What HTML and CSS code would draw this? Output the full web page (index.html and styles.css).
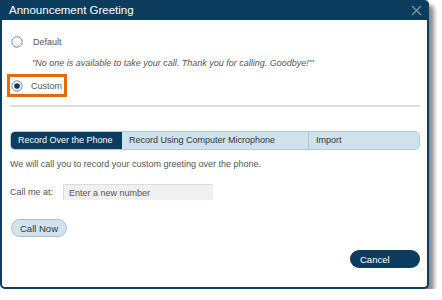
FILE: index.html
```html
<!DOCTYPE html>
<html>

<head>
    <title>Announcement Greeting</title>
    <link rel="stylesheet" href="styles.css">
</head>

<body>
    <div class="dialog">
        <div class="titlebar">
            <span class="title">Announcement Greeting</span>
            <svg class="close" width="11" height="11" viewBox="0 0 11 11">
                <path d="M1 1 L10 10 M10 1 L1 10" stroke="#7f97a9" stroke-width="1.3" fill="none" />
            </svg>
        </div>

        <div class="content">
            <div class="option">
                <svg class="radio" width="12" height="12" viewBox="0 0 12 12">
                    <defs>
                        <linearGradient id="rg" x1="0" y1="0" x2="0" y2="1">
                            <stop offset="0" stop-color="#ffffff" />
                            <stop offset="1" stop-color="#e4e8ec" />
                        </linearGradient>
                    </defs>
                    <circle cx="6" cy="6" r="5.2" fill="url(#rg)" stroke="#8496a6" stroke-width="1" />
                </svg>
                <span class="label">Default</span>
            </div>
            <div class="quote">"No one is available to take your call. Thank you for calling. Goodbye!'"</div>

            <div class="option option-custom">
                <svg class="radio" width="12" height="12" viewBox="0 0 12 12">
                    <circle cx="6" cy="6" r="5.2" fill="url(#rg)" stroke="#8496a6" stroke-width="1" />
                    <circle cx="6" cy="6" r="2.8" fill="#0c3a5a" />
                </svg>
                <span class="label">Custom</span>
            </div>

            <div class="divider"></div>

            <div class="tabs">
                <div class="tab tab-active">Record Over the Phone</div>
                <div class="tab tab-mic">Record Using Computer Microphone</div>
                <div class="tab tab-import">Import</div>
            </div>

            <p class="info">We will call you to record your custom greeting over the phone.</p>

            <div class="call-row">
                <span class="call-label">Call me at:</span>
                <input type="text" class="number-field" placeholder="Enter a new number">
            </div>

            <button class="btn-call" type="button">Call Now</button>

            <div class="footer">
                <button class="btn-cancel" type="button">Cancel</button>
            </div>
        </div>
    </div>
</body>

</html>
```

FILE: styles.css
```css
body {
    margin: 0;
    background-color: #ffffff;
    font-family: "Liberation Sans", Arial, sans-serif;
}

.dialog {
    box-sizing: border-box;
    width: 429px;
    height: 289px;
    border: 2px solid #0c3d5e;
    border-top: 0;
    border-radius: 0 5px 5px 5px;
    box-shadow: 5px 5px 4px rgba(0, 0, 0, 0.45);
    background-color: #ffffff;
}

.titlebar {
    display: flex;
    align-items: center;
    justify-content: space-between;
    height: 20px;
    margin: 0 -2px;
    padding: 0 7px 0 9px;
    background-color: #0c3d5e;
    border-radius: 0 5px 0 0;
}

.title {
    color: #ffffff;
    font-size: 11.5px;
}

.close {
    display: block;
}

.content {
    padding: 10px 7px 0 8px;
}

.option {
    display: flex;
    align-items: center;
    height: 24px;
}

.radio {
    display: block;
    margin-left: 1px;
    margin-right: 10px;
}

.label {
    font-size: 9px;
    color: #555555;
}

.quote {
    margin: 3px 0 0 22px;
    height: 12px;
    line-height: 12px;
    font-size: 9px;
    font-style: italic;
    color: #555555;
}

.option-custom {
    display: inline-flex;
    box-sizing: border-box;
    height: 23px;
    margin: 5px 0 0 -3px;
    padding: 0 2px 0 0;
    border: 3px solid #e36b0c;
}

.option-custom .radio {
    margin-left: 1px;
    margin-right: 8px;
}

.divider {
    height: 2px;
    margin-top: 8px;
    background-color: #dedede;
}

.tabs {
    display: flex;
    box-sizing: border-box;
    height: 19px;
    margin-top: 24px;
    border: 1px solid #b2cbdc;
    border-radius: 5px;
    background-color: #cfe1ed;
    overflow: hidden;
}

.tab {
    box-sizing: border-box;
    padding-left: 7px;
    line-height: 17px;
    font-size: 9px;
    color: #333333;
}

.tab-active {
    width: 112px;
    margin: -1px 0 -1px -1px;
    padding-left: 8px;
    line-height: 19px;
    background-color: #0c3d5e;
    color: #ffffff;
    border-radius: 5px 0 0 5px;
}

.tab-mic {
    width: 187px;
    border-right: 1px solid #a9c3d6;
}

.tab-import {
    flex: 1;
}

.info {
    margin: 8px 0 0 0;
    line-height: 12px;
    font-size: 9px;
    color: #555555;
}

.call-row {
    display: flex;
    align-items: center;
    margin-top: 14px;
}

.call-label {
    width: 53px;
    font-size: 9px;
    color: #555555;
}

.number-field {
    box-sizing: border-box;
    width: 150px;
    height: 16px;
    padding: 0 0 0 5px;
    border: 0;
    border-top: 1px solid #dcdcdc;
    border-left: 1px solid #dcdcdc;
    background-color: #f1efef;
    font-family: "Liberation Sans", Arial, sans-serif;
    font-size: 9px;
    color: #444444;
}

.number-field::placeholder {
    color: #555555;
}

.btn-call {
    display: block;
    box-sizing: border-box;
    width: 56px;
    height: 18px;
    margin: 19px 0 0 1px;
    padding: 0;
    border: 1px solid #a6c2d7;
    border-radius: 9px;
    background-color: #d2e3ef;
    font-family: "Liberation Sans", Arial, sans-serif;
    font-size: 9.5px;
    color: #333333;
}

.footer {
    display: flex;
    justify-content: flex-end;
    margin-top: 13px;
}

.btn-cancel {
    box-sizing: border-box;
    width: 70px;
    height: 18px;
    padding: 0 0 0 10px;
    border: 0;
    border-radius: 9px;
    background-color: #0c3d5e;
    text-align: left;
    font-family: "Liberation Sans", Arial, sans-serif;
    font-size: 9.5px;
    color: #ffffff;
}
```
